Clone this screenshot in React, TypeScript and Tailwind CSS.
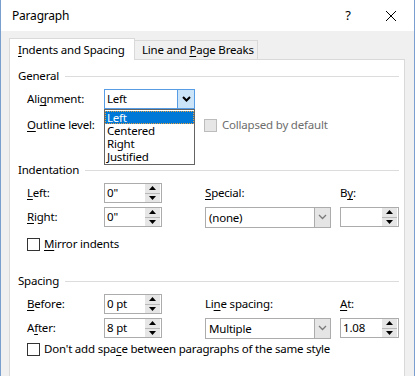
import React from "react";

function U({ c }: { c: string }) {
  return <span className="underline decoration-1 underline-offset-[2px]">{c}</span>;
}

function Chevron({ color = "#000", bold = false }: { color?: string; bold?: boolean }) {
  return (
    <svg width="9" height="6" viewBox="0 0 9 6">
      <path d="M1 1 L4.5 4.5 L8 1" fill="none" stroke={color} strokeWidth={bold ? 2 : 1.3} />
    </svg>
  );
}

function SpinButtons() {
  return (
    <div className="flex flex-col w-[15px] h-[18px] mr-px">
      <div className="flex-1 flex items-center justify-center bg-[#e6e6e6] border-b border-[#b8b8b8]">
        <svg width="7" height="4" viewBox="0 0 7 4">
          <path d="M0 4 L3.5 0 L7 4 Z" fill="#000" />
        </svg>
      </div>
      <div className="flex-1 flex items-center justify-center bg-[#e6e6e6]">
        <svg width="7" height="4" viewBox="0 0 7 4">
          <path d="M0 0 L3.5 4 L7 0 Z" fill="#000" />
        </svg>
      </div>
    </div>
  );
}

function Spin({ value, wide = false }: { value: string; wide?: boolean }) {
  return (
    <div className={`flex items-center h-[20px] border border-[#acacac] bg-white ${wide ? "w-[59px]" : "w-[58px]"}`}>
      <div className="flex-1 pl-[2px] leading-[18px]">{value}</div>
      <SpinButtons />
    </div>
  );
}

function Combo({ value }: { value: string }) {
  return (
    <div className="flex items-center h-[21px] w-[126px] border border-[#acacac] bg-white">
      <div className="flex-1 pl-[3px] leading-[19px]">{value}</div>
      <div className="w-[16px] h-[19px] bg-[#e5e5e5] border-l border-[#acacac] flex items-center justify-center">
        <Chevron color="#7a7a7a" />
      </div>
    </div>
  );
}

function Check({ disabled = false }: { disabled?: boolean }) {
  return (
    <div
      className={`w-[13px] h-[13px] border ${disabled ? "border-[#bcbcbc] bg-[#e6e6e6]" : "border-[#333333] bg-white"}`}
    />
  );
}

function Header({ title }: { title: string }) {
  return (
    <div className="flex items-center h-[14px] pl-[8px] pr-[5px]">
      <span className="leading-[14px]">{title}</span>
      <div className="flex-1 h-px bg-[#dcdcdc] ml-[6px]" />
    </div>
  );
}

export default function App() {
  return (
    <div className="w-[415px] h-[376px] overflow-hidden bg-[#f0f0f0] border-x border-[#7a9fcf] text-[11.5px] tracking-[-0.2px] whitespace-nowrap text-black font-['Noto_Sans',sans-serif] flex flex-col">
      {/* title bar */}
      <div className="h-[31px] bg-white flex items-center shrink-0">
        <div className="pl-[11px] flex-1 text-[12px]">Paragraph</div>
        <div className="w-[20px] text-center text-[13px] mr-[27px]">?</div>
        <svg width="12" height="12" viewBox="0 0 12 12" className="mr-[17px]">
          <path d="M1 1 L11 11 M11 1 L1 11" stroke="#000" strokeWidth="1" />
        </svg>
      </div>

      {/* tabs */}
      <div className="flex items-end pl-[8px] pt-[7px] shrink-0 relative z-10">
        <div className="h-[22px] w-[126px] bg-white border border-b-0 border-[#d9d9d9] pl-[8px] flex items-center -mb-px">
          <span className="leading-[16px]">
            <U c="I" />ndents and Spacing
          </span>
        </div>
        <div className="h-[19px] w-[123px] bg-[#f0f0f0] border border-l-0 border-b-0 border-[#d9d9d9] pl-[7px] flex items-center">
          <span className="leading-[16px]">
            Line and <U c="P" />age Breaks
          </span>
        </div>
      </div>

      {/* panel */}
      <div className="flex-1 ml-[8px] mr-[9px] bg-white border border-[#d9d9d9] border-b-0 flex flex-col">
        <div className="mt-[9px]">
          <Header title="General" />
        </div>

        {/* Alignment */}
        <div className="mt-[6px] h-[20px] flex items-center pl-[17px]">
          <div className="w-[77px]">
            Ali<U c="g" />nment:
          </div>
          <div className="relative">
            <div className="flex items-center h-[20px] w-[91px] border border-[#569de5] bg-white">
              <div className="flex-1 pl-[2px] leading-[18px]">Left</div>
              <div className="w-[17px] h-[18px] bg-[#cce4f7] border-l border-[#569de5] flex items-center justify-center">
                <Chevron bold />
              </div>
            </div>
            <div className="absolute left-0 top-[20px] w-[91px] border border-[#646464] bg-white z-20 leading-[13px] py-px">
              <div className="bg-[#0078d7] text-white border border-dotted border-[#e8a040] pl-px h-[13px] leading-[11px]">
                Left
              </div>
              <div className="pl-[2px] h-[13px]">Centered</div>
              <div className="pl-[2px] h-[13px]">Right</div>
              <div className="pl-[2px] h-[13px]">Justified</div>
            </div>
          </div>
        </div>

        {/* Outline level */}
        <div className="mt-[6px] h-[20px] flex items-center pl-[17px]">
          <div className="w-[77px]">
            <U c="O" />utline level:
          </div>
          <div className="w-[91px]" />
          <div className="ml-[9px] flex items-center">
            <Check disabled />
            <span className="ml-[5px] text-[#6d6d6d]">Collapsed by default</span>
          </div>
        </div>

        {/* Indentation */}
        <div className="mt-[28px]">
          <Header title="Indentation" />
        </div>
        <div className="mt-[6px] h-[20px] flex items-center pl-[17px]">
          <div className="w-[77px]">
            <U c="L" />eft:
          </div>
          <Spin value={'0"'} />
          <div className="ml-[43px] w-[135px]">
            <U c="S" />pecial:
          </div>
          <div>
            B<U c="y" />:
          </div>
        </div>
        <div className="mt-[4px] h-[20px] flex items-center pl-[17px]">
          <div className="w-[77px]">
            <U c="R" />ight:
          </div>
          <Spin value={'0"'} />
          <div className="ml-[43px]">
            <Combo value="(none)" />
          </div>
          <div className="ml-[9px]">
            <Spin value="" wide />
          </div>
        </div>
        <div className="mt-[7px] h-[20px] flex items-center pl-[17px]">
          <Check />
          <span className="ml-[4px]">
            <U c="M" />irror indents
          </span>
        </div>

        {/* Spacing */}
        <div className="mt-[20px]">
          <Header title="Spacing" />
        </div>
        <div className="mt-[6px] h-[20px] flex items-center pl-[17px]">
          <div className="w-[77px]">
            <U c="B" />efore:
          </div>
          <Spin value="0 pt" />
          <div className="ml-[43px] w-[135px]">
            Li<U c="n" />e spacing:
          </div>
          <div>
            <U c="A" />t:
          </div>
        </div>
        <div className="mt-[4px] h-[20px] flex items-center pl-[17px]">
          <div className="w-[77px]">
            A<U c="f" />ter:
          </div>
          <Spin value="8 pt" />
          <div className="ml-[43px]">
            <Combo value="Multiple" />
          </div>
          <div className="ml-[9px]">
            <Spin value="1.08" wide />
          </div>
        </div>
        <div className="mt-[1px] h-[20px] flex items-center pl-[17px]">
          <Check />
          <span className="ml-[4px]">
            Don't add spa<U c="c" />e between paragraphs of the same style
          </span>
        </div>
      </div>
    </div>
  );
}
